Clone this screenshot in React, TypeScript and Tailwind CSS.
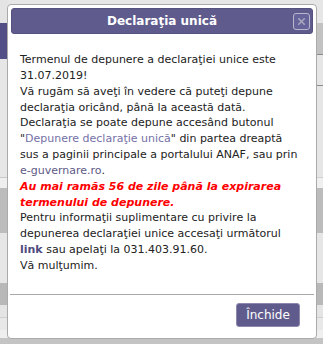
import { X } from 'lucide-react';

const leftStripes: [number, string][] = [
  [23, 'bg-[#e4e4e4]'],
  [36, 'bg-[#524e86]'],
  [119, 'bg-[#e6e6e6] border-b border-[#c8c8c8]'],
  [10, 'bg-[#efefef]'],
  [45, 'bg-[#bcbcbc]'],
  [50, 'bg-[#e6e6e6]'],
  [22, 'bg-[#b8b8b8]'],
  [13, 'bg-[#e4e4e4] border-b border-[#d0d0d0]'],
  [12, 'bg-[#e8e8e8]'],
  [8, 'bg-[#efefef]'],
  [6, 'bg-[#c4c4c4]'],
];

const rightStripes: [number, string][] = [
  [23, 'bg-[#e6e6e6]'],
  [32, 'bg-[#c2c2c2] border-b border-[#8a8a8a]'],
  [31, 'bg-[#e6e6e6] border-b border-[#8a8a8a]'],
  [92, 'bg-[#e6e6e6] border-b border-[#d0d0d0]'],
  [10, 'bg-[#efefef]'],
  [45, 'bg-[#bcbcbc]'],
  [50, 'bg-[#e6e6e6]'],
  [22, 'bg-[#b8b8b8]'],
  [13, 'bg-[#e4e4e4] border-b border-[#d0d0d0]'],
  [12, 'bg-[#e8e8e8]'],
  [8, 'bg-[#efefef]'],
  [6, 'bg-[#c4c4c4]'],
];

function Stripes({ items }: { items: [number, string][] }) {
  return (
    <div className="flex flex-col">
      {items.map(([h, cls], i) => (
        <div key={i} className={cls} style={{ height: h }} />
      ))}
    </div>
  );
}

export default function App() {
  return (
    <div className="relative w-[323px] h-[344px] overflow-hidden bg-[#e6e6e6] font-['DejaVu_Sans',Verdana,sans-serif]">
      {/* page behind the modal */}
      <div className="flex h-full">
        <div className="w-[7px]">
          <Stripes items={leftStripes} />
        </div>
        <div className="flex-1 flex flex-col">
          <div className="flex-1" />
          <div className="h-[6px] bg-[#c4c4c4]" />
        </div>
        <div className="w-[6px]">
          <Stripes items={rightStripes} />
        </div>
      </div>

      {/* dialog */}
      <div className="absolute left-[7px] top-[4px] w-[310px] h-[335px] bg-white border border-[#aaaaaa] rounded-[4px] p-[3px] flex flex-col">
        <div className="relative h-[26px] rounded-[3px] bg-[#5f5b8c] border border-[#55517f] flex items-center justify-center">
          <span className="text-white font-bold text-[12px]">Declaraţia unică</span>
          <button
            type="button"
            className="absolute right-[2px] top-[4px] w-[17px] h-[17px] rounded-[3px] border border-[#b9b7cc] bg-[#66629a] flex items-center justify-center text-[#a9a7bd]"
            aria-label="close"
          >
            <X size={11} strokeWidth={3.5} />
          </button>
        </div>

        <div className="flex-1 pl-[9px] pt-[18px] text-[11px] leading-[15.85px] text-[#222222] whitespace-nowrap">
          Termenul de depunere a declaraţiei unice este
          <br />
          31.07.2019!
          <br />
          Vă rugăm să aveţi în vedere că puteţi depune
          <br />
          declaraţia oricând, până la această dată.
          <br />
          Declaraţia se poate depune accesând butonul
          <br />
          "<span className="text-[#7470a6]">Depunere declaraţie unică</span>" din partea dreaptă
          <br />
          sus a paginii principale a portalului ANAF, sau prin
          <br />
          <span className="text-[#5e5a86]">e-guvernare.ro</span>.
          <br />
          <span className="text-[#ff0000] font-bold italic">
            Au mai ramăs 56 de zile până la expirarea
            <br />
            termenului de depunere.
          </span>
          <br />
          Pentru informaţii suplimentare cu privire la
          <br />
          depunerea declaraţiei unice accesaţi următorul
          <br />
          <span className="font-bold text-[#4e4a7e]">link</span> sau apelaţi la 031.403.91.60.
          <br />
          Vă mulţumim.
        </div>

        <div className="border-t border-[#aaaaaa] -mx-[1px] h-[41px] flex items-start justify-end pt-[8px] pr-[14px]">
          <button
            type="button"
            className="h-[24px] w-[64px] rounded-[3px] bg-[#5f5b8c] border border-[#8c89ad] text-white text-[12px]"
          >
            Închide
          </button>
        </div>
      </div>
    </div>
  );
}
